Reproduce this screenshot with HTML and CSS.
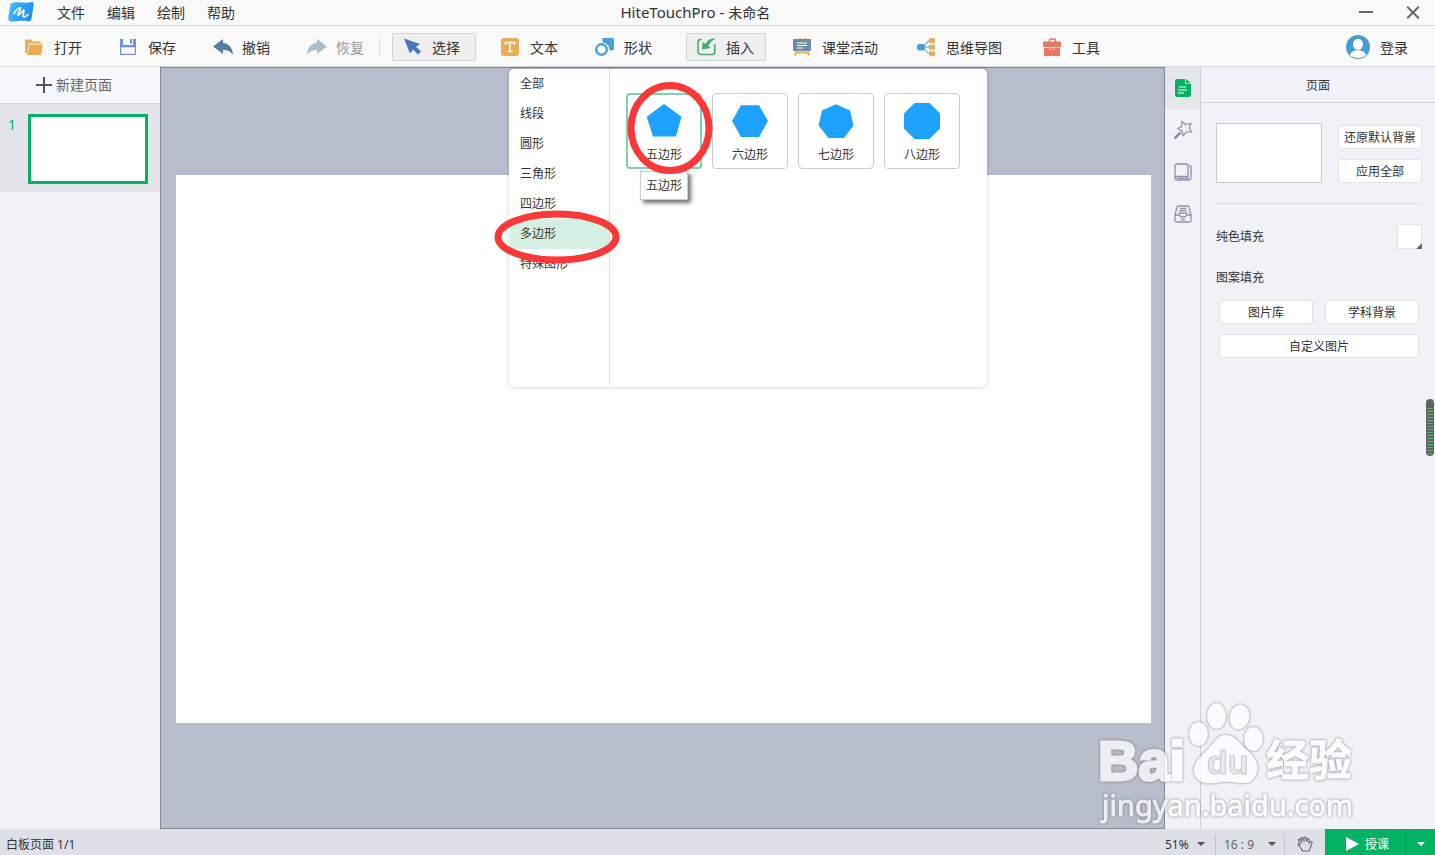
FILE: index.html
```html
<!DOCTYPE html>
<html lang="zh-CN">
<head>
<meta charset="utf-8">
<title>HiteTouchPro - 未命名</title>
<link rel="stylesheet" href="styles.css">
</head>
<body>
<div class="app">
  <header class="titlebar">
    <div class="titlebar-left">
      <svg class="logo" width="26" height="20" viewBox="0 0 26 20" aria-hidden="true">
        <defs><linearGradient id="lg" x1="0" y1="0" x2="1" y2="0.3"><stop offset="0" stop-color="#6cc4fb"/><stop offset="0.35" stop-color="#38abfa"/><stop offset="1" stop-color="#1a93f6"/></linearGradient></defs>
        <path d="M4.500 0.800C10 -.5 18 1.500 23 0.200C25.500 -.3 26 1 25.600 2.500L23.600 16C23.200 18.500 22 19.500 20 19.300C14 18 8 20 2.500 19.500C0.800 19 0 17.500 0.300 16L2.200 3C2.500 1.500 3 1 4.500 0.800Z" fill="url(#lg)"/>
        <path d="M6 11.500C8 8.500 11 5.500 12.300 5.800C13.300 6.200 9 13 10.200 13.300C11.500 13.500 14.800 7.600 15.800 8C16.800 8.600 14 14.200 15.600 14.800C17 15.200 19.200 13.500 20.300 12.300" fill="none" stroke="#fff" stroke-width="1.700" stroke-linecap="round"/>
      </svg>
      <nav class="menus">
        <button class="menu">文件</button><button class="menu">编辑</button><button class="menu">绘制</button><button class="menu">帮助</button>
      </nav>
    </div>
    <h1 class="title"><span class="app-name">HiteTouchPro - </span>未命名</h1>
    <div class="window-controls">
      <button class="win" aria-label="最小化"><svg width="14" height="14" viewBox="0 0 14 14"><path d="M0 6H14" stroke="#666" stroke-width="2"/></svg></button>
      <button class="win" aria-label="关闭"><svg width="14" height="14" viewBox="0 0 14 14"><path d="M1.200 .700L12.800 12.300M12.800 .700L1.200 12.300" stroke="#666" stroke-width="2"/></svg></button>
    </div>
  </header>

  <div class="toolbar">
    <div class="group">
      <button class="tool"><svg width="20" height="20" viewBox="0 0 20 20"><path d="M0 16V3.500Q0 2.500 1 2.500H6L8 4.500H15Q16 4.500 16 5.500V6.500H4L2 16Z" fill="#e9ad55"/><path d="M4.700 7.500H18L16 18H2Z" fill="#e9ad55"/></svg>打开</button>
      <button class="tool"><svg width="20" height="20" viewBox="0 0 20 20"><path d="M1 2H17V18H1Z" fill="#6d92e2"/><path d="M4 2H14V8H4Z" fill="#f9f9fa"/><path d="M11 2H13V6.500H11Z" fill="#6d92e2"/><path d="M2.200 10.300H15.800V16.800H2.200Z" fill="#f9f9fa"/></svg>保存</button>
      <button class="tool"><svg width="20" height="20" viewBox="0 0 20 20"><path d="M0 9.500L10 2V6C16 6.500 19.500 11 20 18C17.500 14.300 14.500 13 10 13V17Z" fill="#557f9e"/></svg>撤销</button>
      <button class="tool disabled" disabled><svg width="20" height="20" viewBox="0 0 20 20"><path d="M20 9.500L10 2V6C4 6.500 .5 11 0 18C2.500 14.300 5.500 13 10 13V17Z" fill="#a7bdcb"/></svg>恢复</button>
    </div>
    <div class="group group-edit">
      <button class="tool boxed wide"><svg width="20" height="20" viewBox="0 0 20 20"><path d="M1 1.500L17 7L13 9.700L18 14.500L15 17.500L10 12.500L7 16.500Z" fill="#4d74c0"/></svg>选择</button>
      <button class="tool"><svg width="20" height="20" viewBox="0 0 20 20"><rect x="0" y="1" width="18" height="18" rx="3" fill="#e9ad55"/><path d="M4.500 8V5.500H13.500V8M9 5.500V14.500M6.500 14.500H11.500" fill="none" stroke="#fff" stroke-width="1.500"/></svg>文本</button>
      <button class="tool"><svg width="20" height="20" viewBox="0 0 20 20"><path d="M7.500 1H17Q19 1 19 3V12.500Q16 14 14.300 13C15 9.500 12 6 7.500 5.500Z" fill="#45a1dd"/><circle cx="6.500" cy="12.500" r="5.300" fill="none" stroke="#45a1dd" stroke-width="2.400"/></svg>形状</button>
    </div>
    <div class="group group-insert">
      <button class="tool boxed"><svg width="20" height="20" viewBox="0 0 20 20"><path d="M4.500 2.500H4Q1 2.500 1 5V14.500Q1 17.500 4 17.500H15Q17.800 17.500 17.800 14.500V7" fill="none" stroke="#4da873" stroke-width="1.600"/><path d="M5.500 5L8.500 7C10.500 3 13 1.500 18.500 1.500C15 4 12.500 6 11.500 9L14 11L5 12.500Z" fill="#4da873"/></svg>插入</button>
      <button class="tool"><svg width="20" height="20" viewBox="0 0 20 20"><path d="M3.500 14.500L2 18.500M14.500 14.500L16 18.500M2 15.500H16.500M7 1V3M12 1V3" stroke="#e9ad55" stroke-width="2"/><rect x="0" y="2" width="18" height="12" rx="1" fill="#6d8ea4"/><path d="M4 6H14M4 8.500H14M4 11H10" stroke="#fff" stroke-width="1"/></svg>课堂活动</button>
      <button class="tool"><svg width="20" height="20" viewBox="0 0 20 20"><path d="M5 10C8 9.500 9 3.500 14 3.500M5 10H14M5 10C8 10.500 9 17 14 17" fill="none" stroke="#8bb9dc" stroke-width="1.300"/><rect x="0" y="7" width="8" height="6.500" rx="2" fill="#45a1dd"/><rect x="12" y="1" width="6" height="5" rx="1.500" fill="#e9ad55"/><rect x="12" y="7.800" width="6" height="5" rx="1.500" fill="#e9ad55"/><rect x="12" y="14.300" width="6" height="5" rx="1.500" fill="#e9ad55"/></svg>思维导图</button>
      <button class="tool tool-last"><svg width="20" height="20" viewBox="0 0 20 20"><path d="M6.500 5V3Q6.500 2 7.500 2H11.500Q12.500 2 12.500 3V5" fill="none" stroke="#e97565" stroke-width="1.500"/><path d="M1 4.500H17Q18 4.500 18 5.500V10H0V5.500Q0 4.500 1 4.500ZM1 11H17V19H2Q1 19 1 18Z" fill="#e97565"/><path d="M6.500 9.500V11.500Q6.500 12.500 7.500 12.500H10.500Q11.500 12.500 11.500 11.500V9.500" fill="none" stroke="#f5b9b0" stroke-width="1.200"/></svg>工具</button>
    </div>
    <button class="login"><svg width="24" height="24" viewBox="0 0 24 24"><circle cx="12" cy="12" r="12" fill="#489dd0"/><ellipse cx="12" cy="9.300" rx="5" ry="5.500" fill="#fff"/><path d="M3.800 19.800C6 16 9 15.300 12 15.300S18 16 20.200 19.800C16 24 8 24 3.800 19.800Z" fill="#fff"/></svg>登录</button>
  </div>

  <main class="workspace">
    <aside class="pages">
      <button class="new-page"><svg width="16" height="16" viewBox="0 0 16 16"><path d="M8 0V16M0 8H16" stroke="#555" stroke-width="2"/></svg>新建页面</button>
      <div class="page-item"><span class="page-no">1</span><button class="thumb" aria-label="页面 1"></button></div>
    </aside>

    <section class="canvas">
      <div class="sheet"></div>
      <div class="popover">
        <ul class="kinds">
          <li><button class="kind">全部</button></li>
          <li><button class="kind">线段</button></li>
          <li><button class="kind">圆形</button></li>
          <li><button class="kind">三角形</button></li>
          <li><button class="kind">四边形</button></li>
          <li><button class="kind selected">多边形</button></li>
          <li><button class="kind">特殊图形</button></li>
        </ul>
        <div class="shapes">
          <button class="shape selected"><svg width="36" height="36" viewBox="0 0 36 36"><path d="M18 1L35.500 13.700L30 33.500H7L.700 13.700Z" fill="#1da3ff"/></svg>五边形</button>
          <button class="shape"><svg width="36" height="36" viewBox="0 0 36 36"><path d="M0 18L9 2.300H27L36 18L27 34H9Z" fill="#1da3ff"/></svg>六边形</button>
          <button class="shape"><svg width="36" height="36" viewBox="0 0 36 36"><path d="M18 1.200L32 7.500L35.500 22.500L26 35H10.500L.500 22.500L4 7.500Z" fill="#1da3ff"/></svg>七边形</button>
          <button class="shape"><svg width="36" height="36" viewBox="0 0 36 36"><path d="M10.500 0H25.500L36 10.500V25.500L25.500 36H10.500L0 25.500V10.500Z" fill="#1da3ff"/></svg>八边形</button>
        </div>
        <div class="tooltip" role="tooltip">五边形</div>
        <svg class="mark mark-shape" width="86" height="94" viewBox="0 0 86 94"><ellipse cx="43" cy="47" rx="39" ry="42.500" fill="none" stroke="#fb3838" stroke-width="7"/></svg>
        <svg class="mark mark-kind" width="126" height="54" viewBox="0 0 126 54"><ellipse cx="63" cy="27" rx="59" ry="23" fill="none" stroke="#fb3838" stroke-width="7"/></svg>
      </div>
    </section>

    <nav class="rail">
      <button class="rail-tab active" aria-label="页面"><svg width="18" height="18" viewBox="0 0 18 18"><path d="M3 0H11V5H17V16Q17 18 15 18H3Q1 18 1 16V2Q1 0 3 0Z" fill="#03b363"/><path d="M12 0L17 4.200H12Z" fill="#03b363"/><path d="M5 8H12M4 11H13M4 14H10" stroke="#fff" stroke-width="1.200"/></svg></button>
      <button class="rail-tab" aria-label="动画"><svg width="20" height="20" viewBox="0 0 20 20" fill="none" stroke="#8e92a4" stroke-width="1.200"><path d="M9 1.500L12.500 4.500L18 3.500L16.200 8L18.500 12L13.500 12L10 15.500L9 11L4.800 8.500L8.500 6.500Z"/><path d="M1.500 18.500L7.500 12.500" stroke-width="2.500"/></svg></button>
      <button class="rail-tab" aria-label="资源"><svg width="18" height="18" viewBox="0 0 18 18" fill="none" stroke="#8e92a4" stroke-width="1.300"><path d="M2.500 1H12Q14 1 14 3V13.500H3Q1 13.500 1 15V2.500Q1 1 2.500 1ZM14 13.500V17H3Q1 17 1 15M15.500 2.500Q17 2.500 17 4V15.500Q17 17 15 17H12M3 15.300H14"/></svg></button>
      <button class="rail-tab" aria-label="素材箱"><svg width="18" height="18" viewBox="0 0 18 18" fill="none" stroke="#8e92a4" stroke-width="1.300"><path d="M1 10L3 2Q3.300 1 4.300 1H13.700Q14.700 1 15 2L17 10M1 10V15.500Q1 17 2.500 17H15.500Q17 17 17 15.500V10H13C12 10 12 12 10.500 12H7.500C6 12 6 10 5 10H1M6 3.500H12M5 5.700H13M4.500 8H13.500M7 14.500H11"/></svg></button>
    </nav>

    <aside class="props">
      <h2 class="props-title">页面</h2>
      <div class="props-body">
        <div class="background">
          <div class="preview"></div>
          <div class="stack"><button class="btn">还原默认背景</button><button class="btn">应用全部</button></div>
        </div>
        <div class="fill-row"><span>纯色填充</span><button class="swatch" aria-label="纯色填充"></button></div>
        <p class="caption">图案填充</p>
        <div class="patterns"><button class="btn">图片库</button><button class="btn">学科背景</button><button class="btn full">自定义图片</button></div>
      </div>
      <button class="handle" aria-label="展开"></button>
    </aside>
  </main>

  <footer class="status">
    <span class="page-count">白板页面 1/1</span>
    <label class="pick zoom-pick"><select aria-label="缩放"><option>51%</option></select><i class="caret"></i></label>
    <label class="pick ratio-pick"><select aria-label="比例"><option>16 : 9</option></select><i class="caret"></i></label>
    <button class="hand" aria-label="移动画布"><svg width="16" height="16" viewBox="0 0 16 16" fill="none" stroke="#666a75" stroke-width="1.100" stroke-linejoin="round"><path d="M5 14.500C5 12 1.500 10.500 1 8.500C1 7.500 2.500 7.500 3.500 8.500L1.500 4.500C1.200 3.200 2.700 3 3.300 4L5 6.500L3.700 2.700C3.700 1.300 5.200 1.300 5.700 2.400L7.300 5.500L6.900 2C7 .7 8.500 .8 8.900 2L9.800 5.500L10.200 3C10.500 1.800 12 2 12 3.200L12 7.500L13.500 5.500C14.500 4.800 15.500 5.800 15 7L13 12.500L12 15H6Z"/></svg></button>
    <button class="teach"><svg width="13" height="14" viewBox="0 0 13 14"><path d="M0 0L13 7L0 14Z" fill="#fff"/></svg>授课</button>
    <button class="teach-more" aria-label="授课选项"><i class="caret light"></i></button>
  </footer>

  <svg class="watermark" width="270" height="130" viewBox="0 0 270 130" aria-hidden="true">
    <g fill="#fff">
      <ellipse cx="104.500" cy="36" rx="9.500" ry="12"/>
      <ellipse cx="122.500" cy="18" rx="9.500" ry="13"/>
      <ellipse cx="145.500" cy="19" rx="10" ry="12.500" transform="rotate(12 145.500 19)"/>
      <ellipse cx="159.500" cy="41" rx="9.500" ry="12"/>
      <path d="M132 37C141 37 145 45 152 51C161 58 165 66 163 74C160 86 150 86 141 84.500C135 83.500 129 83.500 122 85C111 87 102 84 100 75C99 64 107 58 114 51C120 45 123 37 132 37Z"/>
    </g>
    <text x="4" y="82" class="wm wm-bai">Bai</text>
    <text x="113" y="76" class="wm-du">du</text>
    <text x="172" y="78" class="wm wm-cn">经验</text>
    <text x="8" y="118" class="wm wm-url">jingyan.baidu.com</text>
  </svg>
</div>
</body>
</html>
```
FILE: styles.css
```css
* { box-sizing: border-box; }

body {
  margin: 0;
  font: 14px/20px "Noto Sans", "Noto Sans CJK SC", sans-serif;
  color: #333;
}

button, select {
  margin: 0;
  padding: 0;
  border: 0;
  background: none;
  font: inherit;
  color: inherit;
}

svg { display: block; flex: none; }

.app {
  position: relative;
  display: flex;
  flex-direction: column;
  height: 100vh;
  overflow: hidden;
}

.titlebar {
  display: grid;
  grid-template-columns: 14fr auto 15fr;
  align-items: center;
  height: 26px;
  background: #f9f9fa;
  border-bottom: 1px solid #d9d9d9;
}

.titlebar-left { display: flex; align-items: center; padding-left: 8px; }
.logo { margin-bottom: 2px; }
.menus { display: flex; gap: 22px; margin-left: 23px; }
.title { margin: 0; font-size: 14px; font-weight: 400; line-height: 20px; }
.app-name { font-size: 15px; white-space: pre; }
.window-controls { display: flex; justify-content: flex-end; gap: 33px; padding-right: 15px; }

.toolbar {
  display: flex;
  align-items: center;
  height: 41px;
  padding: 2px 27px 0 14px;
  background: #f9f9fa;
  border-bottom: 1px solid #d9d9d9;
}

.group { display: flex; align-items: center; gap: 14px; }
.group-edit { margin-left: 3px; }
.group-edit::before {
  content: "";
  width: 1px;
  height: 18px;
  margin-right: -2px;
  background: #d9d9d9;
}
.group-insert { gap: 16px; margin-left: 22px; }

.tool {
  display: flex;
  align-items: center;
  gap: 9px;
  height: 28px;
  padding: 2px 11px 0 10px;
  border: 1px solid transparent;
  white-space: nowrap;
}
.tool svg { margin-bottom: 2px; }
.tool-last { margin-left: 2px; }
.boxed { background: #efefef; border-color: #d4d4d4; border-radius: 2px; }
.wide { padding-right: 15px; }
.disabled { color: #999; }
.login { display: flex; align-items: center; gap: 10px; margin-left: auto; padding-top: 2px; }
.login svg { margin-bottom: 3px; }

.workspace { flex: 1; display: flex; min-height: 0; }

.pages { width: 160px; background: #f1f2f8; }
.new-page {
  display: flex;
  align-items: center;
  justify-content: center;
  gap: 4px;
  width: 100%;
  height: 37px;
  padding: 0 12px 0 0;
  background: #f6f8fd;
  border-bottom: 1px solid #d4d6dc;
  color: #666;
}
.page-item { display: flex; gap: 12px; padding: 10px 12px 8px 8px; background: #e4e5eb; }
.page-no { width: 8px; padding-top: 1px; color: #03b363; }
.thumb { flex: 1; height: 70px; background: #fff; border: 3px solid #03b363; }

.canvas {
  position: relative;
  flex: 1;
  display: flex;
  align-items: center;
  padding: 2px 13px 0 15px;
  background: #b7bdcb;
  border: 1px solid #838893;
}
.sheet { width: 100%; aspect-ratio: 16 / 9; background: #fff; }

.popover {
  position: absolute;
  top: 1px;
  left: 348px;
  display: flex;
  width: 478px;
  height: 318px;
  background: #fff;
  border-radius: 5px;
  box-shadow: 0 0 4px rgba(0, 0, 0, 0.2);
  font-size: 12px;
}
.kinds {
  width: 101px;
  height: 316px;
  margin: 0;
  padding: 0 0 0 1px;
  border-right: 1px solid #dedede;
  list-style: none;
}
.kind {
  display: block;
  width: 100%;
  height: 30px;
  padding-left: 10px;
  text-align: left;
  line-height: 28px;
}
.kind.selected { background: #d5f0e3; }

.shapes { display: flex; align-items: flex-start; gap: 10px; padding: 24px 16px; }
.shape {
  display: flex;
  flex-direction: column;
  align-items: center;
  justify-content: flex-end;
  gap: 6px;
  width: 76px;
  height: 76px;
  padding-bottom: 3px;
  border: 1px solid #ccc;
  border-radius: 4px;
}
.shape.selected { border: 2px solid #7dd1ae; padding-bottom: 2px; }

.tooltip {
  position: absolute;
  top: 102px;
  left: 131px;
  padding: 5px 5px 4px;
  background: #fff;
  border: 1px solid #ccc;
  box-shadow: 3px 3px 4px rgba(0, 0, 0, 0.55);
  line-height: 18px;
}
.mark { position: absolute; pointer-events: none; }
.mark-shape { top: 12px; left: 118px; }
.mark-kind { top: 141px; left: -15px; }

.rail { width: 36px; background: #f1f2f8; border-right: 1px solid #ccd0d8; }
.rail-tab { display: flex; align-items: center; justify-content: center; width: 100%; height: 42px; }
.rail-tab.active { background: #e4e7ea; }

.props { position: relative; width: 234px; background: #f1f2f8; font-size: 12px; }
.props-title {
  margin: 0;
  height: 36px;
  border-bottom: 1px solid #ccd0d8;
  font-size: 12px;
  font-weight: 400;
  line-height: 37px;
  text-align: center;
}
.props-body { padding: 20px 13px 0 15px; }
.background {
  display: flex;
  justify-content: space-between;
  padding-bottom: 20px;
  border-bottom: 1px solid #dcdee3;
}
.preview { width: 106px; height: 60px; background: #fff; border: 1px solid #ccc; }
.stack { display: flex; flex-direction: column; justify-content: flex-end; gap: 10px; width: 84px; }
.btn {
  height: 24px;
  padding-top: 1px;
  background: #fff;
  border: 1px solid #e2e3e8;
  border-radius: 3px;
  line-height: 21px;
  white-space: nowrap;
}
.fill-row { display: flex; align-items: center; justify-content: space-between; padding-top: 20px; }
.swatch {
  position: relative;
  width: 25px;
  height: 25px;
  border: 1px solid #e2e3e8;
  background: #fff;
}
.swatch::after {
  content: "";
  position: absolute;
  right: -1px;
  bottom: -1px;
  width: 6px;
  height: 6px;
  background: #666;
  clip-path: polygon(100% 0, 100% 100%, 0 100%);
}
.caption { margin: 19px 0 12px; }
.patterns { display: grid; grid-template-columns: 1fr 1fr; gap: 10px 12px; padding: 0 3px; }
.full { grid-column: 1 / -1; }

.handle {
  position: absolute;
  top: 332px;
  right: 1px;
  width: 8px;
  height: 57px;
  border: solid #606264;
  border-width: 9px 1px 2px;
  border-radius: 4px;
  background: repeating-linear-gradient(#52b46e 0 1px, #606264 1px 3px);
}

.status {
  display: flex;
  align-items: center;
  height: 26px;
  background: #dde0e7;
  font-size: 12px;
}
.page-count { flex: 1; padding: 6px 0 0 6px; }
.pick {
  display: flex;
  align-items: center;
  justify-content: space-between;
  height: 22px;
  margin-top: 4px;
  padding-top: 2px;
  border-right: 1px solid #c4c6cc;
}
.pick select { appearance: none; }
.zoom-pick { width: 51px; padding-right: 10px; }
.ratio-pick { width: 69px; padding-left: 8px; padding-right: 8px; color: #666; }
.caret { margin-bottom: 2px; border: solid transparent; border-width: 4px 4px 0; border-top-color: #555; }
.caret.light { border-top-color: #fff; }
.hand { display: flex; justify-content: center; width: 40px; padding-top: 4px; }
.teach, .teach-more {
  display: flex;
  align-items: center;
  justify-content: center;
  gap: 6px;
  height: 26px;
  padding-top: 5px;
  background: #03b363;
  color: #fff;
}
.teach { width: 81px; padding-left: 5px; border-right: 1px solid #05994f; }
.teach svg { margin-bottom: 2px; }
.teach-more { width: 29px; }

.watermark {
  position: absolute;
  right: 71px;
  bottom: 27px;
  pointer-events: none;
  opacity: 0.75;
  filter: drop-shadow(0 0 1px rgba(90, 92, 102, 0.8)) drop-shadow(0 0 1px rgba(90, 92, 102, 0.3));
}
.wm { fill: #fff; stroke: #fff; }
.wm-bai { font: bold 56px "Liberation Sans", sans-serif; stroke-width: 3px; }
.wm-du { font: bold 34px "Liberation Sans", sans-serif; fill: #e6e7ec; stroke: #b9bbc4; }
.wm-cn { font: bold 43px "Noto Sans CJK SC", sans-serif; stroke-width: 1px; }
.wm-url { font: 29px "Noto Sans", sans-serif; stroke-width: 1px; }
```
